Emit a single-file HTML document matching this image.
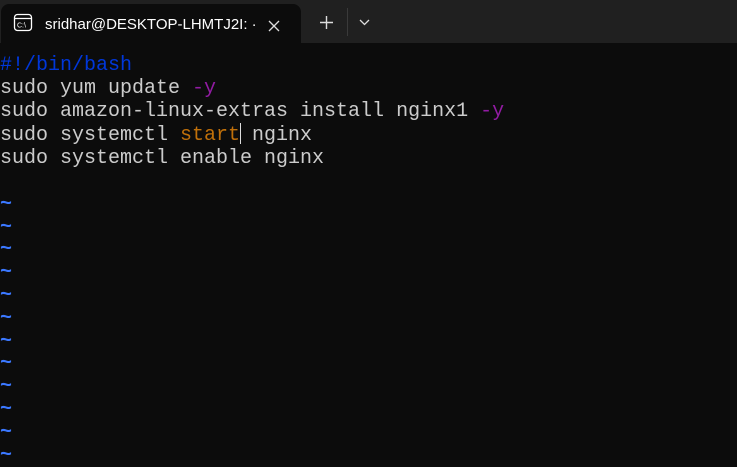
<!DOCTYPE html>
<html><head><style>
body{margin:0;width:737px;height:457px;background:#0c0c0c;overflow:hidden;position:relative;font-family:"Liberation Sans",sans-serif}
.bar{position:absolute;left:0;top:0;width:737px;height:43px;background:#202020}
.tab{position:absolute;left:1px;top:4px;width:300px;height:39px;background:#0c0c0c;border-radius:8px 8px 0 0}
.title{position:absolute;left:44px;top:12px;color:#fff;font-size:15px}
.term{position:absolute;left:0;top:55px;font-family:"Liberation Mono",monospace;font-size:20px;line-height:22.8px;color:#cccccc;white-space:pre}
.b{color:#0037da}.p{color:#921ba3}.o{color:#c0700a}.t{color:#3b78ff;font-weight:bold}
.cur{display:inline-block;width:1px;height:21px;background:#ddd;vertical-align:-4px;margin-right:-1px}
</style></head><body>
<div class="bar"><div class="tab">
<svg style="position:absolute;left:12px;top:9px" width="20" height="20" viewBox="0 0 20 20"><rect x="1.5" y="1.5" width="17" height="16" rx="3" fill="none" stroke="#fff" stroke-width="1.3"/><line x1="1.5" y1="5.5" x2="18.5" y2="5.5" stroke="#fff" stroke-width="1.2"/><text x="4" y="14.5" font-size="7" fill="#fff" font-family="Liberation Sans">C:\</text></svg>
<div class="title">sridhar@DESKTOP-LHMTJ2I: ·</div>
<svg style="position:absolute;left:267px;top:16px" width="12" height="12"><path d="M1 1L11 11M11 1L1 11" stroke="#ddd" stroke-width="1.3"/></svg>
</div>
<svg style="position:absolute;left:320px;top:16px" width="13" height="13"><path d="M6.5 0V13M0 6.5H13" stroke="#ddd" stroke-width="1.4"/></svg>
<div style="position:absolute;left:347px;top:8px;width:1px;height:28px;background:#3a3a3a"></div>
<svg style="position:absolute;left:359px;top:19px" width="11" height="7"><path d="M1 1L5.5 5.5L10 1" stroke="#ddd" stroke-width="1.3" fill="none"/></svg>
</div>
<div class="term"><span class="b">#!/bin/bash</span>
sudo yum update <span class="p">-y</span>
sudo amazon-linux-extras install nginx1 <span class="p">-y</span>
sudo systemctl <span class="o">start</span><span class="cur"></span> nginx
sudo systemctl enable nginx

<span class="t">~
~
~
~
~
~
~
~
~
~
~
~</span></div>
</body></html>
